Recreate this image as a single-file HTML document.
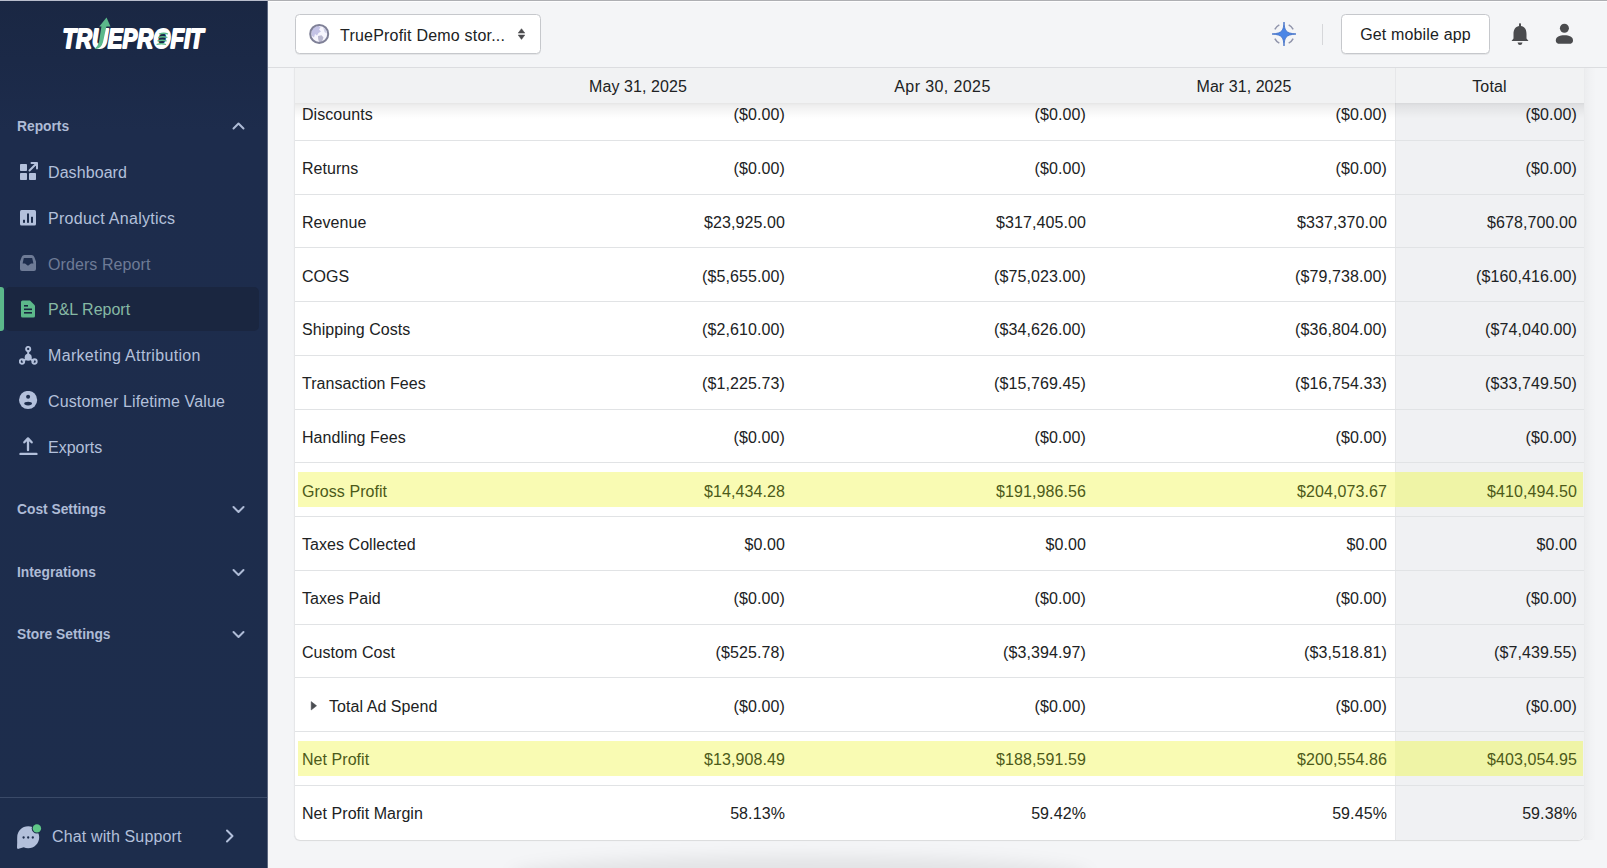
<!DOCTYPE html>
<html><head><meta charset="utf-8">
<style>
*{box-sizing:border-box;margin:0;padding:0}
html,body{width:1607px;height:868px;overflow:hidden}
body{font-family:"Liberation Sans",sans-serif;background:#f4f5f7;position:relative;color:#202223;font-size:16px}
.abs{position:absolute}
svg{display:block}
#topline{left:0;top:0;width:1607px;height:1px;background:linear-gradient(90deg,#b9bdcc 0,#b9bdcc 267px,#aeafb3 268px);z-index:10}
#topline2{left:268px;top:1px;width:1339px;height:1px;background:#fdfdfe;z-index:10}
#sb{left:0;top:0;width:267px;height:868px;background:linear-gradient(#1a2743 0px,#1b2947 60px,#1d2c4c 130px,#1d2d4c 100%)}
#sbedge{left:267px;top:0;width:1px;height:868px;background:#5d6880}
.sec{left:17px;font-weight:bold;font-size:13.8px;color:#aebbd6;line-height:16px;white-space:nowrap}
.item{left:48px;font-size:16px;color:#b3c0db;white-space:nowrap;line-height:19px}
#active{left:5px;top:287px;width:254px;height:44px;background:#1a2640;border-radius:5px}
#activebar{left:0;top:287px;width:4px;height:44px;background:#5cb88a;border-radius:0 3px 3px 0}
#sep{left:0;top:797px;width:267px;height:1px;background:#3a4a68}
#hdr{left:268px;top:1px;width:1339px;height:66px;background:#f4f5f7}
#hdrline{left:268px;top:67px;width:1339px;height:1px;background:#dcdde0}
.btn{background:#fff;border:1px solid #c6c8cc;border-radius:4.5px;box-shadow:0 1px 0 rgba(0,0,0,.06)}
#card{left:294px;top:68px;width:1290px;height:772px;background:#fff;border-left:1px solid #e6e7e9;border-radius:0 0 6px 6px;box-shadow:0 1px 1px rgba(0,0,0,.11)}
#thead{left:295px;top:68px;width:1289px;height:35px;background:#f1f2f3;z-index:3}
#theadsh{left:295px;top:103px;width:1289px;height:16px;background:linear-gradient(rgba(0,0,0,.10),rgba(0,0,0,.065) 15%,rgba(0,0,0,.04) 45%,rgba(0,0,0,.015) 75%,rgba(0,0,0,0));z-index:3}
#totcol{left:1395px;top:68px;width:189px;height:772px;background:#f0f1f3;border-left:1px solid #e6e7e9;border-radius:0 0 6px 0}
.th{top:69px;height:35px;line-height:36px;text-align:center;font-size:16px;color:#202223;z-index:4}
.rl{left:295px;width:1289px;height:1px;background:#e1e3e5}
.lab{left:302px;font-size:16px;color:#202223;white-space:nowrap;letter-spacing:.05px}
.v{text-align:right;font-size:16px;color:#202223;white-space:nowrap;letter-spacing:.1px}
.hl{left:298px;width:1285px;height:35px;background:#f9fbb3}
.hlt{left:1395px;width:188px;height:35px;background:#eff4a6}
.g{color:#4c5a19}
#bshadow{left:510px;top:856px;width:580px;height:40px;border-radius:50%;background:rgba(0,0,0,.07);filter:blur(8px)}
</style></head><body>
<div id="topline" class="abs"></div>
<div id="topline2" class="abs"></div>
<div id="sb" class="abs"></div>
<div id="sbedge" class="abs"></div>

<!-- logo -->
<svg class="abs" style="left:55px;top:12px" width="160" height="48" viewBox="0 0 160 48">
  <text x="7.5" y="36.3" font-family="Liberation Sans" font-weight="bold" font-style="italic" font-size="27.5" fill="#fff" stroke="#fff" stroke-width="1.9" stroke-linejoin="round" textLength="141" lengthAdjust="spacingAndGlyphs">TRUEPROFIT</text>
  <path d="M46.5 14 L51.5 14 L48 30 Q46.5 36 41 37 L39.5 37 Q43 34 44 30 Z" fill="#5cb88a"/>
  <path d="M44.3 14.5 L55.5 14.5 L51.5 5.5 Z" fill="#5cb88a"/>
  <g stroke="#5cb88a" stroke-width="1.3" fill="none">
    <path d="M104 22 Q109 20.5 113 22"/><path d="M103.2 25.5 Q108 24 112.4 25.5"/><path d="M102.4 29 Q107.5 27.5 111.7 29"/><path d="M101.6 32.5 Q106.5 31 111 32.5"/>
  </g>
</svg>

<div class="abs sec" style="top:119px">Reports</div>
<svg class="abs" style="left:231px;top:119px" width="15" height="15" viewBox="0 0 15 15"><path d="M2.5 9.5 L7.5 4.5 L12.5 9.5" fill="none" stroke="#aebbd6" stroke-width="2" stroke-linecap="round" stroke-linejoin="round"/></svg>

<div id="active" class="abs"></div>
<div id="activebar" class="abs"></div>

<!-- dashboard icon -->
<svg class="abs" style="left:19px;top:161px" width="20" height="20" viewBox="0 0 20 20" fill="#b3c0db">
  <rect x="1" y="3" width="7" height="7" rx="0.8"/>
  <rect x="1" y="12" width="7" height="7" rx="0.8"/>
  <rect x="10" y="12" width="7" height="7" rx="0.8"/>
  <path d="M10.5 9.5 L17.5 2.5 M12.5 2 L18 2 L18 7.5" fill="none" stroke="#b3c0db" stroke-width="2" stroke-linecap="round" stroke-linejoin="round"/>
</svg>
<div class="abs item" style="top:162.5px;letter-spacing:.08px">Dashboard</div>

<!-- product analytics -->
<svg class="abs" style="left:19px;top:208px" width="20" height="20" viewBox="0 0 20 20">
  <rect x="1" y="2" width="16" height="15.5" rx="1.5" fill="#b3c0db"/>
  <rect x="4" y="11.8" width="2" height="3" fill="#1d2d4c"/>
  <rect x="8" y="5.5" width="2" height="9.3" fill="#1d2d4c"/>
  <rect x="12" y="8.8" width="2" height="6" fill="#1d2d4c"/>
</svg>
<div class="abs item" style="top:209.2px;letter-spacing:.27px">Product Analytics</div>

<!-- orders -->
<svg class="abs" style="left:19px;top:254px" width="20" height="20" viewBox="0 0 20 20">
  <path d="M5.5 1 H12.5 Q14.5 1 15.3 3 L17 7.5 V15 Q17 17 15 17 H3 Q1 17 1 15 V7.5 L2.7 3 Q3.5 1 5.5 1 Z M4.8 4 H13.2 L14.4 9.5 H12 L9 11.7 L6 9.5 H3.6 Z" fill="#6e7b96" fill-rule="evenodd"/>
</svg>
<div class="abs item" style="top:254.5px;color:#6e7b96;letter-spacing:.08px">Orders Report</div>

<!-- P&L -->
<svg class="abs" style="left:19px;top:299px" width="20" height="20" viewBox="0 0 20 20">
  <path d="M3.5 1.5 H11 L16 6.5 V17 Q16 18.5 14.5 18.5 H3.5 Q2 18.5 2 17 V3 Q2 1.5 3.5 1.5 Z" fill="#5cb88a"/>
  <rect x="5" y="6" width="4" height="1.6" fill="#19253f"/>
  <rect x="5" y="9.5" width="8" height="1.6" fill="#19253f"/>
  <rect x="5" y="13" width="8" height="1.6" fill="#19253f"/>
</svg>
<div class="abs item" style="top:299.6px;color:#86b9a4">P&amp;L Report</div>

<!-- marketing attribution -->
<svg class="abs" style="left:19px;top:345.5px" width="20" height="20" viewBox="0 0 20 20">
  <path d="M9.2 4.5 L9.2 9 M9.2 11.5 L3.5 15.3 M9.2 11.5 L15 15.3" stroke="#b3c0db" stroke-width="2"/>
  <circle cx="9.2" cy="3" r="2.1" fill="none" stroke="#b3c0db" stroke-width="1.9"/>
  <circle cx="9.2" cy="11.2" r="3.5" fill="#b3c0db"/>
  <circle cx="3" cy="15.5" r="2.2" fill="none" stroke="#b3c0db" stroke-width="1.9"/>
  <circle cx="15.5" cy="15.5" r="2.2" fill="none" stroke="#b3c0db" stroke-width="1.9"/>
</svg>
<div class="abs item" style="top:346.3px;letter-spacing:.33px">Marketing Attribution</div>

<!-- customer -->
<svg class="abs" style="left:19px;top:391.3px" width="20" height="20" viewBox="0 0 20 20">
  <circle cx="9.1" cy="9" r="9.1" fill="#b3c0db"/>
  <circle cx="9.1" cy="5.8" r="2" fill="#1d2d4c"/>
  <ellipse cx="9.1" cy="12.6" rx="3.9" ry="1.8" fill="#1d2d4c"/>
</svg>
<div class="abs item" style="top:392px;letter-spacing:.13px">Customer Lifetime Value</div>

<!-- exports -->
<svg class="abs" style="left:19px;top:436px" width="20" height="20" viewBox="0 0 20 20">
  <path d="M9 14.2 V2.8 M5.3 6.3 L9 2.4 L12.7 6.3" fill="none" stroke="#b3c0db" stroke-width="2.3" stroke-linecap="round" stroke-linejoin="round"/>
  <rect x="0.3" y="16.7" width="18.3" height="2.4" rx="1.2" fill="#b3c0db"/>
</svg>
<div class="abs item" style="top:437.5px">Exports</div>

<div class="abs sec" style="top:502px">Cost Settings</div>
<svg class="abs" style="left:231px;top:502px" width="15" height="15" viewBox="0 0 15 15"><path d="M2.5 5 L7.5 10 L12.5 5" fill="none" stroke="#aebbd6" stroke-width="2" stroke-linecap="round" stroke-linejoin="round"/></svg>
<div class="abs sec" style="top:564.5px">Integrations</div>
<svg class="abs" style="left:231px;top:564.5px" width="15" height="15" viewBox="0 0 15 15"><path d="M2.5 5 L7.5 10 L12.5 5" fill="none" stroke="#aebbd6" stroke-width="2" stroke-linecap="round" stroke-linejoin="round"/></svg>
<div class="abs sec" style="top:627px">Store Settings</div>
<svg class="abs" style="left:231px;top:627px" width="15" height="15" viewBox="0 0 15 15"><path d="M2.5 5 L7.5 10 L12.5 5" fill="none" stroke="#aebbd6" stroke-width="2" stroke-linecap="round" stroke-linejoin="round"/></svg>

<div id="sep" class="abs"></div>
<svg class="abs" style="left:16px;top:823px" width="28" height="28" viewBox="0 0 28 28">
  <path d="M12.2 3.3 C18.3 3.3 23.2 8.2 23.2 14.2 C23.2 20.3 18.3 25.2 12.2 25.2 C10.6 25.2 9.1 24.9 7.7 24.3 L2.6 25.8 Q1 26.2 1 24.6 L1.2 19.2 C1.1 17.6 1.2 15.8 1.2 14.2 C1.2 8.2 6.1 3.3 12.2 3.3 Z" fill="#b3c0db"/>
  <circle cx="7.6" cy="14.5" r="1.15" fill="#1d2d4c"/><circle cx="12.2" cy="14.5" r="1.15" fill="#1d2d4c"/><circle cx="16.8" cy="14.5" r="1.15" fill="#1d2d4c"/>
  <circle cx="20.9" cy="5.4" r="5.2" fill="#1d2d4c"/>
  <circle cx="20.9" cy="5.4" r="4.2" fill="#5fc787"/>
</svg>
<div class="abs item" style="left:52px;top:826.7px;letter-spacing:.14px">Chat with Support</div>
<svg class="abs" style="left:222px;top:828px" width="16" height="16" viewBox="0 0 16 16"><path d="M5 2.5 L10.5 8 L5 13.5" fill="none" stroke="#b3c0db" stroke-width="2" stroke-linecap="round" stroke-linejoin="round"/></svg>

<!-- header -->
<div id="hdr" class="abs"></div>
<div id="hdrline" class="abs"></div>
<div class="abs btn" style="left:295px;top:14px;width:246px;height:40px"></div>
<svg class="abs" style="left:308px;top:23px" width="22" height="22" viewBox="0 0 22 22">
  <circle cx="11.2" cy="10.9" r="9" fill="#f6f5fd"/>
  <path d="M4 6.5 Q6.5 3.2 10.5 2.8 L12.5 4.5 L11 6.5 L13 8.5 L10.5 10 L9 12.5 L7 11 L6 14.5 L3.5 12.5 Q3 9 4 6.5 Z" fill="#c4c3e6"/>
  <path d="M10 13 L13.5 12.2 L15.5 14.5 L13.8 19.5 L11.2 19.8 L10.2 16 Z" fill="#b9b8cf"/>
  <path d="M15.2 4.2 L18.2 6.8 L18.8 10.5 L16.5 9 Z" fill="#cfcfe6"/>
  <circle cx="11.2" cy="10.9" r="9" fill="none" stroke="#7f8097" stroke-width="2"/>
</svg>
<div class="abs" style="left:340px;top:25px;line-height:19px;white-space:nowrap;letter-spacing:.21px;top:25.6px">TrueProfit Demo stor...</div>
<svg class="abs" style="left:516.5px;top:27px" width="9" height="14" viewBox="0 0 9 14">
  <path d="M4.5 1.7 L7.8 6.1 H1.2 Z M1.2 8 H7.8 L4.5 12.4 Z" fill="#4a4a4d" stroke="#4a4a4d" stroke-width="0.5" stroke-linejoin="round"/>
</svg>

<svg class="abs" style="left:1269.6px;top:19.8px" width="28" height="28" viewBox="0 0 28 28">
  <path d="M18.68 4.82 A10.3 10.3 0 0 1 23.18 9.32 M23.18 18.68 A10.3 10.3 0 0 1 18.68 23.18 M9.32 23.18 A10.3 10.3 0 0 1 4.82 18.68 M4.82 9.32 A10.3 10.3 0 0 1 9.32 4.82" fill="none" stroke="#9094ab" stroke-width="1.5"/>
  <path d="M14 2 C14.6 10 15 13.2 26 14 C15 14.8 14.6 18 14 26 C13.4 18 13 14.8 2 14 C13 13.2 13.4 10 14 2 Z" fill="#4b86e6" stroke="#3e6cc4" stroke-width="0.8" stroke-linejoin="round"/>
</svg>
<div class="abs" style="left:1322px;top:24px;width:1px;height:21px;background:#d6d7da"></div>
<div class="abs btn" style="left:1341px;top:14px;width:149px;height:40px"></div>
<div class="abs" style="left:1341px;top:25px;width:149px;text-align:center;line-height:19px;white-space:nowrap;letter-spacing:.16px">Get mobile app</div>

<svg class="abs" style="left:1509px;top:22px" width="22" height="24" viewBox="0 0 22 24">
  <path d="M11 1 Q12 1 12 2.5 V4 C16 4.8 17.5 8 17.5 12 V16.5 L19.5 19 H2.5 L4.5 16.5 V12 C4.5 8 6 4.8 10 4 V2.5 Q10 1 11 1 Z" fill="#4a4b4e"/>
  <path d="M8.5 20.5 H13.5 Q13 23 11 23 Q9 23 8.5 20.5 Z" fill="#4a4b4e"/>
</svg>
<svg class="abs" style="left:1553px;top:22px" width="22" height="24" viewBox="0 0 22 24">
  <circle cx="11.4" cy="6.2" r="4.5" fill="#4a4b4e"/>
  <path d="M2.8 18.5 C2.8 14.8 6.5 13.3 11.4 13.3 C16.3 13.3 20 14.8 20 18.5 C20 21 18.5 21.8 16 21.8 H6.8 C4.3 21.8 2.8 21 2.8 18.5 Z" fill="#4a4b4e"/>
</svg>

<!-- table -->
<div class="abs" style="left:1584px;top:68px;width:12px;height:772px;background:linear-gradient(90deg,rgba(0,0,0,.035),rgba(0,0,0,.01) 60%,rgba(0,0,0,0))"></div>
<div id="card" class="abs"></div>
<div id="totcol" class="abs"></div>
<div class="abs rl" style="top:139.90px"></div>
<div class="abs lab" style="left:302px;top:105.43px;line-height:19px">Discounts</div>
<div class="abs v" style="left:585px;width:200px;top:105.43px;line-height:19px">($0.00)</div>
<div class="abs v" style="left:886px;width:200px;top:105.43px;line-height:19px">($0.00)</div>
<div class="abs v" style="left:1187px;width:200px;top:105.43px;line-height:19px">($0.00)</div>
<div class="abs v" style="left:1377px;width:200px;top:105.43px;line-height:19px">($0.00)</div>
<div class="abs rl" style="top:193.65px"></div>
<div class="abs lab" style="left:302px;top:159.18px;line-height:19px">Returns</div>
<div class="abs v" style="left:585px;width:200px;top:159.18px;line-height:19px">($0.00)</div>
<div class="abs v" style="left:886px;width:200px;top:159.18px;line-height:19px">($0.00)</div>
<div class="abs v" style="left:1187px;width:200px;top:159.18px;line-height:19px">($0.00)</div>
<div class="abs v" style="left:1377px;width:200px;top:159.18px;line-height:19px">($0.00)</div>
<div class="abs rl" style="top:247.40px"></div>
<div class="abs lab" style="left:302px;top:212.93px;line-height:19px">Revenue</div>
<div class="abs v" style="left:585px;width:200px;top:212.93px;line-height:19px">$23,925.00</div>
<div class="abs v" style="left:886px;width:200px;top:212.93px;line-height:19px">$317,405.00</div>
<div class="abs v" style="left:1187px;width:200px;top:212.93px;line-height:19px">$337,370.00</div>
<div class="abs v" style="left:1377px;width:200px;top:212.93px;line-height:19px">$678,700.00</div>
<div class="abs rl" style="top:301.15px"></div>
<div class="abs lab" style="left:302px;top:266.67px;line-height:19px">COGS</div>
<div class="abs v" style="left:585px;width:200px;top:266.67px;line-height:19px">($5,655.00)</div>
<div class="abs v" style="left:886px;width:200px;top:266.67px;line-height:19px">($75,023.00)</div>
<div class="abs v" style="left:1187px;width:200px;top:266.67px;line-height:19px">($79,738.00)</div>
<div class="abs v" style="left:1377px;width:200px;top:266.67px;line-height:19px">($160,416.00)</div>
<div class="abs rl" style="top:354.90px"></div>
<div class="abs lab" style="left:302px;top:320.42px;line-height:19px">Shipping Costs</div>
<div class="abs v" style="left:585px;width:200px;top:320.42px;line-height:19px">($2,610.00)</div>
<div class="abs v" style="left:886px;width:200px;top:320.42px;line-height:19px">($34,626.00)</div>
<div class="abs v" style="left:1187px;width:200px;top:320.42px;line-height:19px">($36,804.00)</div>
<div class="abs v" style="left:1377px;width:200px;top:320.42px;line-height:19px">($74,040.00)</div>
<div class="abs rl" style="top:408.65px"></div>
<div class="abs lab" style="left:302px;top:374.17px;line-height:19px">Transaction Fees</div>
<div class="abs v" style="left:585px;width:200px;top:374.17px;line-height:19px">($1,225.73)</div>
<div class="abs v" style="left:886px;width:200px;top:374.17px;line-height:19px">($15,769.45)</div>
<div class="abs v" style="left:1187px;width:200px;top:374.17px;line-height:19px">($16,754.33)</div>
<div class="abs v" style="left:1377px;width:200px;top:374.17px;line-height:19px">($33,749.50)</div>
<div class="abs rl" style="top:462.40px"></div>
<div class="abs lab" style="left:302px;top:427.92px;line-height:19px">Handling Fees</div>
<div class="abs v" style="left:585px;width:200px;top:427.92px;line-height:19px">($0.00)</div>
<div class="abs v" style="left:886px;width:200px;top:427.92px;line-height:19px">($0.00)</div>
<div class="abs v" style="left:1187px;width:200px;top:427.92px;line-height:19px">($0.00)</div>
<div class="abs v" style="left:1377px;width:200px;top:427.92px;line-height:19px">($0.00)</div>
<div class="abs hl" style="top:471.90px"></div>
<div class="abs hlt" style="top:471.90px"></div>
<div class="abs rl" style="top:516.15px"></div>
<div class="abs lab g" style="left:302px;top:481.67px;line-height:19px">Gross Profit</div>
<div class="abs v g" style="left:585px;width:200px;top:481.67px;line-height:19px">$14,434.28</div>
<div class="abs v g" style="left:886px;width:200px;top:481.67px;line-height:19px">$191,986.56</div>
<div class="abs v g" style="left:1187px;width:200px;top:481.67px;line-height:19px">$204,073.67</div>
<div class="abs v g" style="left:1377px;width:200px;top:481.67px;line-height:19px">$410,494.50</div>
<div class="abs rl" style="top:569.90px"></div>
<div class="abs lab" style="left:302px;top:535.42px;line-height:19px">Taxes Collected</div>
<div class="abs v" style="left:585px;width:200px;top:535.42px;line-height:19px">$0.00</div>
<div class="abs v" style="left:886px;width:200px;top:535.42px;line-height:19px">$0.00</div>
<div class="abs v" style="left:1187px;width:200px;top:535.42px;line-height:19px">$0.00</div>
<div class="abs v" style="left:1377px;width:200px;top:535.42px;line-height:19px">$0.00</div>
<div class="abs rl" style="top:623.65px"></div>
<div class="abs lab" style="left:302px;top:589.17px;line-height:19px">Taxes Paid</div>
<div class="abs v" style="left:585px;width:200px;top:589.17px;line-height:19px">($0.00)</div>
<div class="abs v" style="left:886px;width:200px;top:589.17px;line-height:19px">($0.00)</div>
<div class="abs v" style="left:1187px;width:200px;top:589.17px;line-height:19px">($0.00)</div>
<div class="abs v" style="left:1377px;width:200px;top:589.17px;line-height:19px">($0.00)</div>
<div class="abs rl" style="top:677.40px"></div>
<div class="abs lab" style="left:302px;top:642.92px;line-height:19px">Custom Cost</div>
<div class="abs v" style="left:585px;width:200px;top:642.92px;line-height:19px">($525.78)</div>
<div class="abs v" style="left:886px;width:200px;top:642.92px;line-height:19px">($3,394.97)</div>
<div class="abs v" style="left:1187px;width:200px;top:642.92px;line-height:19px">($3,518.81)</div>
<div class="abs v" style="left:1377px;width:200px;top:642.92px;line-height:19px">($7,439.55)</div>
<div class="abs rl" style="top:731.15px"></div>
<svg class="abs" style="left:309.5px;top:700.57px" width="8" height="10" viewBox="0 0 8 10"><path d="M1.2 0.6 L6.6 4.8 L1.2 9 Z" fill="#4a4d52" stroke="#4a4d52" stroke-width="0.5" stroke-linejoin="round"/></svg>
<div class="abs lab" style="left:329px;top:696.67px;line-height:19px">Total Ad Spend</div>
<div class="abs v" style="left:585px;width:200px;top:696.67px;line-height:19px">($0.00)</div>
<div class="abs v" style="left:886px;width:200px;top:696.67px;line-height:19px">($0.00)</div>
<div class="abs v" style="left:1187px;width:200px;top:696.67px;line-height:19px">($0.00)</div>
<div class="abs v" style="left:1377px;width:200px;top:696.67px;line-height:19px">($0.00)</div>
<div class="abs hl" style="top:740.65px"></div>
<div class="abs hlt" style="top:740.65px"></div>
<div class="abs rl" style="top:784.90px"></div>
<div class="abs lab g" style="left:302px;top:750.42px;line-height:19px">Net Profit</div>
<div class="abs v g" style="left:585px;width:200px;top:750.42px;line-height:19px">$13,908.49</div>
<div class="abs v g" style="left:886px;width:200px;top:750.42px;line-height:19px">$188,591.59</div>
<div class="abs v g" style="left:1187px;width:200px;top:750.42px;line-height:19px">$200,554.86</div>
<div class="abs v g" style="left:1377px;width:200px;top:750.42px;line-height:19px">$403,054.95</div>
<div class="abs lab" style="left:302px;top:804.17px;line-height:19px">Net Profit Margin</div>
<div class="abs v" style="left:585px;width:200px;top:804.17px;line-height:19px">58.13%</div>
<div class="abs v" style="left:886px;width:200px;top:804.17px;line-height:19px">59.42%</div>
<div class="abs v" style="left:1187px;width:200px;top:804.17px;line-height:19px">59.45%</div>
<div class="abs v" style="left:1377px;width:200px;top:804.17px;line-height:19px">59.38%</div>
<div id="thead" class="abs"></div>
<div id="theadsh" class="abs"></div>
<div class="abs" style="left:1395px;top:68px;width:1px;height:35px;background:#e6e7e9;z-index:4"></div>
<div class="abs th" style="left:484px;width:308px;letter-spacing:0.08px">May 31, 2025</div>
<div class="abs th" style="left:792px;width:301px;letter-spacing:0.4px">Apr 30, 2025</div>
<div class="abs th" style="left:1093px;width:302px;letter-spacing:0.05px">Mar 31, 2025</div>
<div class="abs th" style="left:1395px;width:189px;letter-spacing:0.17px">Total</div>
<div id="bshadow" class="abs"></div>
</body></html>
